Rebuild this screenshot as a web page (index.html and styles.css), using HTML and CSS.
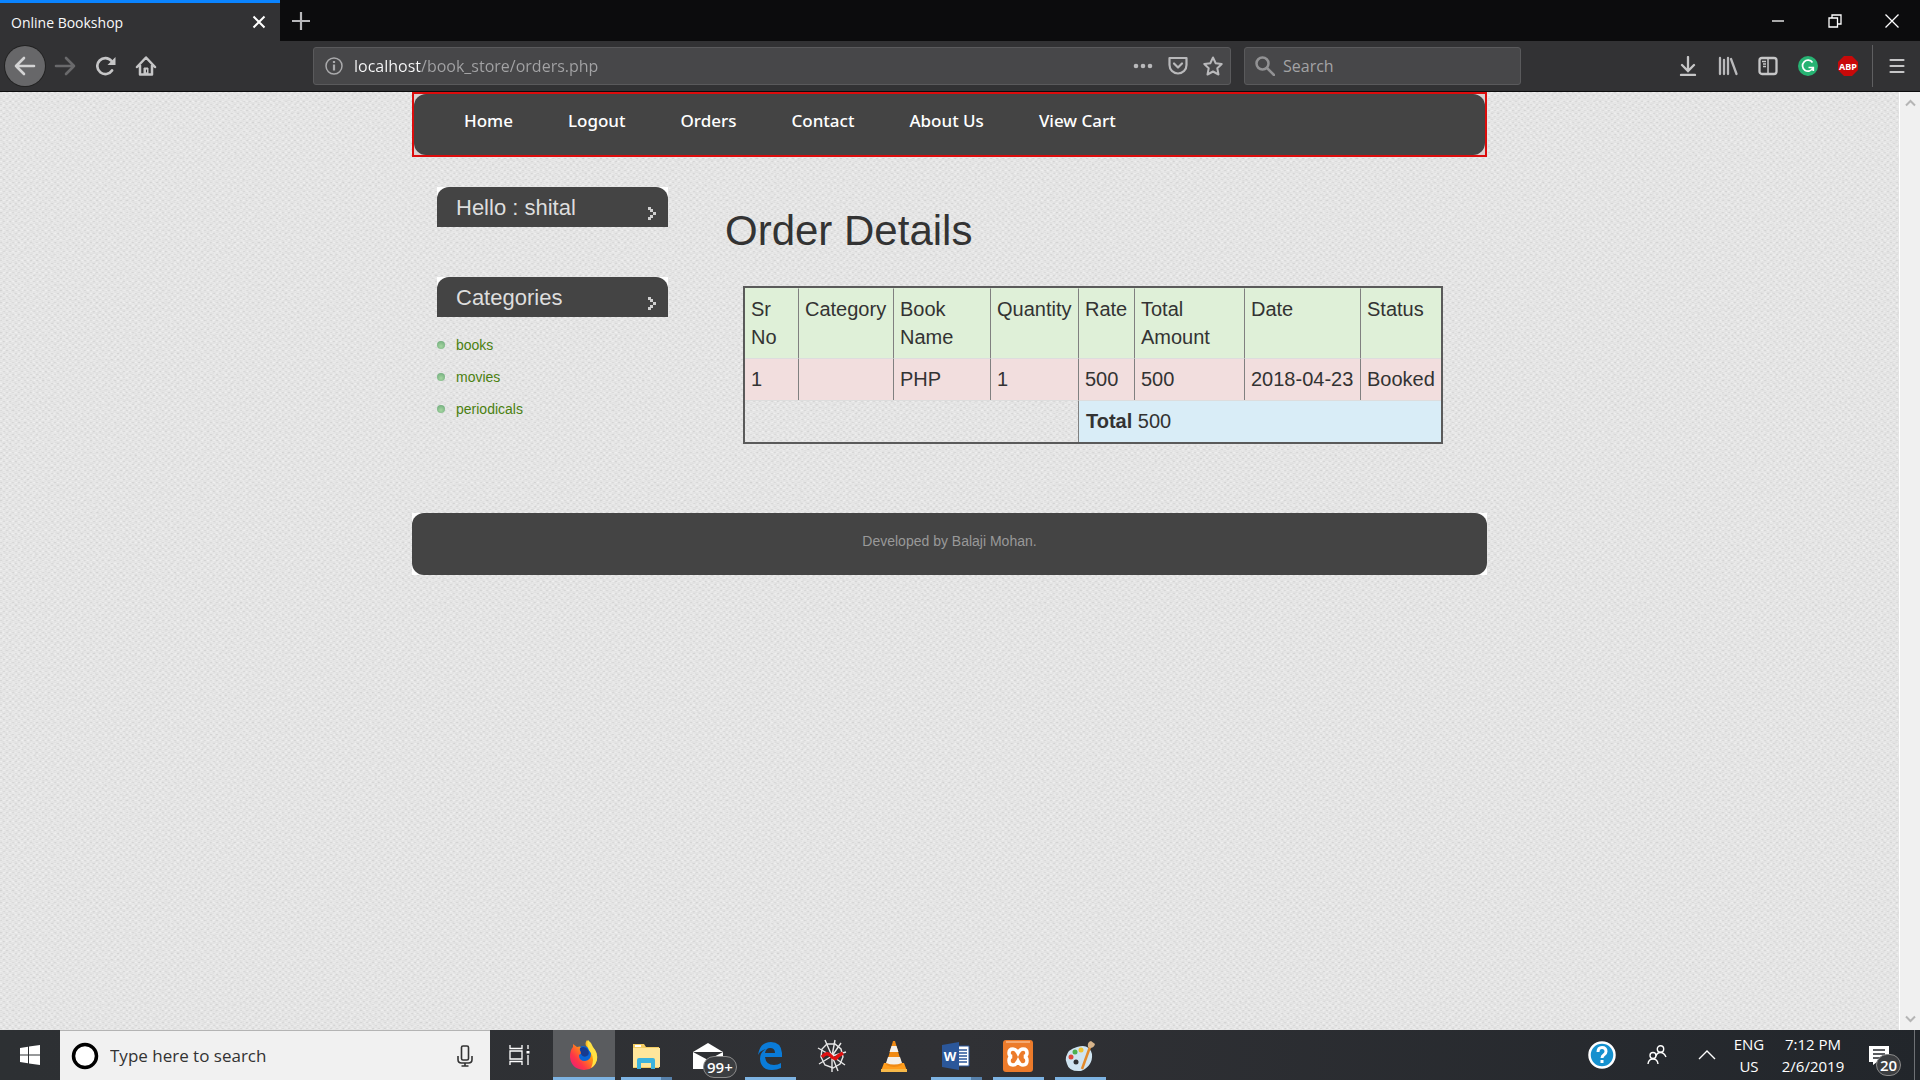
FILE: index.html
```html
<!DOCTYPE html>
<html lang="en">
<head>
<meta charset="utf-8">
<title>Online Bookshop</title>
<link rel="stylesheet" href="styles.css">
</head>
<body>
<header class="browser">
  <div class="tabs">
    <div class="tab"><span>Online Bookshop</span>
      <button class="icon-btn tab-close" aria-label="Close tab"><svg width="14" height="14" viewBox="0 0 14 14"><path d="M1.500 1.500l11 11M12.500 1.500l-11 11" stroke="#fff" stroke-width="2" fill="none"/></svg></button>
    </div>
    <button class="icon-btn tab-new" aria-label="New tab"><svg width="18" height="18" viewBox="0 0 18 18"><path d="M9 0v18M0 9h18" stroke="#b9b9bb" stroke-width="2.200"/></svg></button>
    <div class="window-buttons">
      <button class="icon-btn" aria-label="Minimize"><svg width="14" height="14" viewBox="0 0 14 14"><path d="M1 7h12" stroke="#fff" stroke-width="1.300"/></svg></button>
      <button class="icon-btn" aria-label="Restore"><svg width="14" height="14" viewBox="0 0 14 14" fill="none" stroke="#fff" stroke-width="1.300"><path d="M1 4h8.500v9H1zM4 4V1h9v9H9.500"/></svg></button>
      <button class="icon-btn" aria-label="Close"><svg width="14" height="14" viewBox="0 0 14 14"><path d="M.5.5l13 13M13.500.5l-13 13" stroke="#fff" stroke-width="1.300"/></svg></button>
    </div>
  </div>
  <div class="toolbar">
    <div class="nav-buttons">
      <button class="icon-btn back" aria-label="Back"><svg width="22" height="20" viewBox="0 0 22 20" fill="none" stroke="#d3d3d4" stroke-width="2.600" stroke-linecap="round" stroke-linejoin="round"><path d="M20 10H2M10 2L2 10l8 8"/></svg></button>
      <button class="icon-btn" aria-label="Forward"><svg width="22" height="20" viewBox="0 0 22 20" fill="none" stroke="#69696b" stroke-width="2.600" stroke-linecap="round" stroke-linejoin="round"><path d="M2 10h18M12 2l8 8-8 8"/></svg></button>
      <button class="icon-btn" aria-label="Reload"><svg width="20" height="20" viewBox="0 0 20 20" fill="none" stroke="#c6c6c7" stroke-width="2.700" stroke-linecap="round"><path d="M16 14.500A8 8 0 1 1 15.500 5"/><path d="M19.500 1v8h-8z" fill="#c6c6c7" stroke="none"/></svg></button>
      <button class="icon-btn" aria-label="Home"><svg width="22" height="20" viewBox="0 0 22 20" fill="none" stroke="#c6c6c7" stroke-width="2.500" stroke-linecap="round" stroke-linejoin="round"><path d="M2 11L11 1.500 20 11M5 9.500V18.500h12V9.500"/><path d="M9 18v-6h4v6z" fill="#c6c6c7" stroke-width="1"/><path d="M11.500 14v2" stroke="#323234" stroke-width="1"/></svg></button>
    </div>
    <div class="field address">
      <svg width="18" height="18" viewBox="0 0 18 18" fill="none" stroke="#aaaaac"><circle cx="9" cy="9" r="8" stroke-width="1.500"/><path d="M9 7.500v6M9 4v2" stroke-width="2.200"/></svg>
      <input class="url" type="text" aria-label="Address" value="localhost/book_store/orders.php">
      <div class="address-actions">
        <button class="icon-btn" aria-label="Page actions"><svg width="20" height="6" viewBox="0 0 20 6" fill="#b9b9bb"><circle cx="3" cy="3" r="2.300"/><circle cx="10" cy="3" r="2.300"/><circle cx="17" cy="3" r="2.300"/></svg></button>
        <button class="icon-btn" aria-label="Save to Pocket"><svg width="20" height="20" viewBox="0 0 20 20" fill="none" stroke="#b9b9bb" stroke-width="2.200" stroke-linecap="round" stroke-linejoin="round"><path d="M1.500 2h17v7a8.500 8.500 0 0 1-17 0z"/><path d="M6 7.500l4 4 4-4"/></svg></button>
        <button class="icon-btn" aria-label="Bookmark"><svg width="20" height="20" viewBox="0 0 20 20" fill="none" stroke="#b9b9bb" stroke-width="2" stroke-linejoin="round"><path d="M10 1.500l2.700 5.700 6 .8-4.400 4.300 1.200 6.200L10 15.500l-5.500 3 1.200-6.200L1.300 8l6-.8z"/></svg></button>
      </div>
    </div>
    <div class="field search">
      <svg width="20" height="20" viewBox="0 0 20 20" fill="none" stroke="#929294" stroke-width="2.500" stroke-linecap="round"><circle cx="7.500" cy="7.500" r="6"/><path d="M12 12l7 7"/></svg>
      <input class="search-box" type="text" aria-label="Search" placeholder="Search">
    </div>
    <div class="extensions">
      <button class="icon-btn" aria-label="Downloads"><svg width="20" height="20" viewBox="0 0 20 20" fill="none" stroke="#c6c6c7" stroke-width="2.300" stroke-linecap="round"><path d="M10 1v13M4 9l6 6 6-6M3 19h14"/></svg></button>
      <button class="icon-btn" aria-label="Library"><svg width="20" height="20" viewBox="0 0 20 20" fill="none" stroke="#b9b9bb" stroke-width="2.300" stroke-linecap="round"><path d="M2 2v16M6 4v14M10 2v16M13 3l5.500 15"/></svg></button>
      <button class="icon-btn" aria-label="Sidebars"><svg width="20" height="20" viewBox="0 0 20 20" fill="none" stroke="#c6c6c7"><rect x="1.500" y="2" width="17" height="16" rx="2.500" stroke-width="2.300"/><path d="M10 2v16" stroke-width="1.500"/><path d="M4 5.500h4M5 8h3M5 10.500h3" stroke-width="1.300"/></svg></button>
      <button class="icon-btn" aria-label="Grammarly"><svg width="20" height="20" viewBox="0 0 20 20"><circle cx="10" cy="10" r="10" fill="#27b373"/><path d="M14.500 6.500A5.500 5.500 0 1 0 15 12M10.500 11.500h4.800v3.500" fill="none" stroke="#fff" stroke-width="1.700"/></svg></button>
      <button class="icon-btn" aria-label="Adblock Plus"><svg width="20" height="20" viewBox="0 0 20 20"><path d="M6 0h8l6 6v8l-6 6H6l-6-6V6z" fill="#c80909"/><text x="10" y="13.500" class="abp" text-anchor="middle">ABP</text></svg></button>
      <span class="menu-cell"><button class="icon-btn" aria-label="Menu"><svg width="16" height="16" viewBox="0 0 16 16" stroke="#c6c6c7" stroke-width="2.200" stroke-linecap="round"><path d="M1.500 2h13M1.500 8h13M1.500 14h13"/></svg></button></span>
    </div>
  </div>
</header>

<div class="viewport">
  <div class="page">
    <div class="site">
      <nav class="menu"><div class="menu-inner">
        <a href="#">Home</a><a href="#">Logout</a><a href="#">Orders</a><a href="#">Contact</a><a href="#">About Us</a><a href="#">View Cart</a>
      </div></nav>
      <div class="columns">
        <aside class="sidebar">
          <section class="block">
            <div class="block-head"><h2>Hello : shital<svg width="9" height="13" viewBox="0 0 9 13" fill="#d0d0d0"><path d="M1 0h3v3H1zM3 2h3v3H3zM6 5h3v3H6zM3 8h3v3H3zM1 10h3v3H1z"/></svg></h2></div>
          </section>
          <section class="block">
            <div class="block-head"><h2>Categories<svg width="9" height="13" viewBox="0 0 9 13" fill="#d0d0d0"><path d="M1 0h3v3H1zM3 2h3v3H3zM6 5h3v3H6zM3 8h3v3H3zM1 10h3v3H1z"/></svg></h2></div>
            <ul class="links">
              <li><a href="#">books</a></li>
              <li><a href="#">movies</a></li>
              <li><a href="#">periodicals</a></li>
            </ul>
          </section>
        </aside>
        <main class="content">
          <h1>Order Details</h1>
          <table class="orders">
            <colgroup><col class="c-no"><col class="c-cat"><col class="c-book"><col class="c-qty"><col class="c-rate"><col class="c-amount"><col class="c-date"><col></colgroup>
            <thead><tr><th>Sr No</th><th>Category</th><th>Book Name</th><th>Quantity</th><th>Rate</th><th>Total Amount</th><th>Date</th><th>Status</th></tr></thead>
            <tbody>
              <tr class="item"><td>1</td><td></td><td>PHP</td><td>1</td><td>500</td><td>500</td><td>2018-04-23</td><td>Booked</td></tr>
              <tr><td colspan="4"></td><td colspan="4" class="total"><b>Total</b> 500</td></tr>
            </tbody>
          </table>
        </main>
      </div>
      <footer class="footer"><p>Developed by Balaji Mohan.</p></footer>
    </div>
  </div>
  <div class="scrollbar">
    <svg width="11" height="8" viewBox="0 0 11 8"><path d="M1 6.500l4.500-4.500L10 6.500" fill="none" stroke="#b5b5b5" stroke-width="2"/></svg>
    <svg width="11" height="8" viewBox="0 0 11 8"><path d="M1 1.500L5.500 6 10 1.500" fill="none" stroke="#b5b5b5" stroke-width="2"/></svg>
  </div>
</div>

<footer class="taskbar">
  <button class="start" aria-label="Start"><svg width="20" height="20" viewBox="0 0 20 20" fill="#fff"><path d="M0 3l8-1.200v7.700H0zM9 1.600L20 0v9.500H9zM0 10.500h8v7.700L0 17zM9 10.500h11V20L9 18.400z"/></svg></button>
  <label class="task-search">
    <svg width="28" height="28" viewBox="0 0 28 28"><circle cx="14" cy="14" r="11.500" fill="#fff" stroke="#000" stroke-width="3.500"/></svg>
    <input type="text" aria-label="Type here to search" placeholder="Type here to search">
    <svg width="16" height="22" viewBox="0 0 16 22" fill="none" stroke="#333" stroke-width="1.600"><rect x="4.500" y="1" width="7" height="14" rx="1.500"/><path d="M1 11v3.500q0 3.500 3.500 3.500h7q3.500 0 3.500-3.500V11M8 18v3M4.500 21h7"/></svg>
  </label>
  <button class="task-view" aria-label="Task view"><svg width="22" height="20" viewBox="0 0 22 20" fill="none" stroke="#fff" stroke-width="1.300"><path d="M1 0v3.500h12V0M1 20v-3.500h12V20M1 6h12v8H1zM19 0v4M19 10v10"/><path d="M17.500 6h3v2.500h-3z" fill="#fff" stroke="none"/></svg></button>
  <div class="apps">
    <button class="app active" aria-label="Firefox"><svg width="30" height="32" viewBox="0 0 30 32"><defs><linearGradient id="ff" x1="1" y1="0" x2="0" y2="1"><stop offset="0" stop-color="#fff44f"/><stop offset=".4" stop-color="#ff980e"/><stop offset=".7" stop-color="#ff3647"/><stop offset="1" stop-color="#e31587"/></linearGradient></defs><circle cx="14" cy="17" r="10" fill="#0a66d6"/><path d="M18 1q4 4 5 7 6 5 5 12-2 11-13 11Q2 30 1 18 1 11 4 8V5l4 3q3-1 4 0-2 2-1 4l3 1-4 3q0 6 6 6 6-1 6-7 0-4-4-7-3-3 0-7z" fill="url(#ff)"/><path d="M19 1q4 3 5 7 5 6 4 13-2 6-6 8 4-9 0-15-5-5-3-13z" fill="#ffe244"/><path d="M11 9q5-3 8 2 2 4-1 6-4 2-6-2z" fill="#173b91"/></svg></button>
    <button class="app running grouped" aria-label="File Explorer"><svg width="28" height="26" viewBox="0 0 28 26"><path d="M1 1h11l2 3h13v21H1z" fill="#f3cc62"/><path d="M1 5h27v19H1z" fill="#ffe69b"/><path d="M3 2h6v2H3z" fill="#fff"/><path d="M5 26v-9q0-2 2-2h14q2 0 2 2v9h-4v-6H9v6z" fill="#3cb3dd"/></svg></button>
    <button class="app" aria-label="Mail"><span class="mail"><svg width="30" height="28" viewBox="0 0 30 28"><path d="M0 10L15 1l15 9v17H0z" fill="#fff"/><path d="M0 10h30l-15 8z" fill="#2e3033"/></svg><span class="badge wide">99+</span></span></button>
    <button class="app running" aria-label="Edge"><svg width="26" height="30" viewBox="0 0 26 30"><path d="M1 14Q3 1 14 1q10 0 11 11v4H8q1 8 9 8 4 0 7-2v5q-4 2-9 2-11 0-12-11 0-7 6-10-5 1-8 6zM8 12h10q0-5-5-5-4 0-5 5z" fill="#0a7bd8" fill-rule="evenodd"/></svg></button>
    <button class="app" aria-label="Spider"><svg width="30" height="34" viewBox="0 0 30 34" fill="none" stroke="#e8e8e8" stroke-width="1.400"><path d="M15 17L18 1M15 17L24 4M15 17L8 1M15 17L29 13M15 17L1 9M15 17L28 26M15 17L2 25M15 17L21 32M15 17v16"/><path d="M10 5l8 0 6 5 2 8-3 7-7 4-8-3-4-8 1-8z"/><path d="M5 18q5-6 9-1 4 5 7 0l5-3" stroke="#df1010" stroke-width="3.500"/></svg></button>
    <button class="app" aria-label="VLC"><svg width="26" height="32" viewBox="0 0 26 32"><path d="M3 23h20l3 8H0z" fill="#ff9d1c"/><path d="M12 1h2l7 24q-8 4-16 0z" fill="#f08a13"/><path d="M10.500 6h5l2 6h-9zM7 17h12l2 6q-8 3-16 0z" fill="#f4f0ea"/><path d="M0 29h26v3H0z" fill="#f7b949"/></svg></button>
    <button class="app running grouped" aria-label="Word"><svg width="28" height="28" viewBox="0 0 28 28"><path d="M14 4h13v20H14z" fill="#fff" stroke="#2b579a"/><path d="M16 8h9M16 11h9M16 14h9M16 17h9M16 20h9" stroke="#2b579a" stroke-width="1.500"/><path d="M0 3l17-3v28L0 25z" fill="#2b579a"/><text x="8" y="19" class="word" text-anchor="middle">W</text></svg></button>
    <button class="app running" aria-label="XAMPP"><svg width="30" height="32" viewBox="0 0 30 32"><rect width="30" height="32" rx="3" fill="#ec7b2b"/><path d="M3 2h24" stroke="#f7b88b" stroke-width="1.500"/><path d="M10 9q-4 0-4 4 0 3 3 3.500-3 .5-3 4Q6 25 10 25q3 0 5-4 2 4 5 4 4 0 4-4.500 0-3.500-3-4 3-.5 3-3.500 0-4-4-4-3 0-5 4-2-4-5-4z" fill="none" stroke="#fff" stroke-width="3.500"/></svg></button>
    <button class="app running" aria-label="Paint"><svg width="30" height="32" viewBox="0 0 30 32"><path d="M12 7Q24 3 27 14q1 12-11 17-12 1-14-7-2-4-1-7 2-8 11-10z" fill="#cfe4f1"/><circle cx="6" cy="17" r="2.500" fill="#e04b3c"/><circle cx="10" cy="12" r="2.500" fill="#4cb050"/><circle cx="16" cy="10" r="2.500" fill="#f0c330"/><circle cx="11" cy="22" r="2.500" fill="#2e3033"/><path d="M17 29L25 7" stroke="#e28a2c" stroke-width="2.500"/><path d="M23 7q-1-5 3-6l4 3q-1 4-5 4z" fill="#d6b48b"/></svg></button>
  </div>
  <div class="tray">
    <svg class="help" width="30" height="30" viewBox="0 0 30 30"><circle cx="15" cy="15" r="12.500" fill="#1591cf" stroke="#fff" stroke-width="2.500"/><path d="M11 12q0-4.500 4-4.500t4 4q0 2-2 3.200t-2 3.300M15 20v3" fill="none" stroke="#fff" stroke-width="3"/></svg>
    <svg class="people" width="20" height="20" viewBox="0 0 20 20" fill="none" stroke="#fff" stroke-width="1.400"><circle cx="13.500" cy="4" r="3.200"/><circle cx="6" cy="10.500" r="3"/><path d="M9 11q1-3.500 4.500-3.500T19 12M1 19q.5-5 5-5t5 5"/></svg>
    <svg class="chevron" width="18" height="10" viewBox="0 0 18 10"><path d="M1 9l8-8 8 8" fill="none" stroke="#fff" stroke-width="1.400"/></svg>
    <div class="lang">ENG<br>US</div>
    <div class="clock">7:12 PM<br>2/6/2019</div>
    <div class="notes"><svg width="20" height="20" viewBox="0 0 20 20"><path d="M0 1h20v16H8l-4 3v-3H0z" fill="#fff"/><path d="M4 5h12M4 9h12M4 13h8" stroke="#24272c" stroke-width="1.300"/></svg><span class="badge">20</span></div>
    <div class="show-desktop"></div>
  </div>
</footer>
</body>
</html>
```
FILE: styles.css
```css
* { box-sizing: border-box; }
body {
  margin: 0;
  min-height: 100vh;
  display: flex;
  flex-direction: column;
  font-family: "Open Sans", "Noto Sans", sans-serif;
  background: #e5e5e5;
}
h1, h2, p, ul { margin: 0; padding: 0; }
button { border: 0; background: none; padding: 0; font: inherit; }
svg { display: block; flex: none; }
input { border: 0; outline: 0; background: none; padding: 0; min-width: 0; font: inherit; }
.icon-btn { display: flex; align-items: center; justify-content: center; flex: none; }

/* Browser chrome */
.browser { background: #323234; border-bottom: 1px solid #0c0c0d; }
.tabs { display: flex; height: 41px; background: #0c0c0d; }
.tab {
  width: 280px;
  display: flex;
  align-items: center;
  justify-content: space-between;
  padding: 0 14px 0 11px;
  border-top: 3px solid #0a84ff;
  background: #323234;
  color: #f9f9fa;
  font-size: 14px;
}
.tab-new { width: 42px; }
.window-buttons { display: flex; margin-left: auto; }
.window-buttons .icon-btn { width: 57px; }
.toolbar { display: flex; align-items: center; height: 50px; padding-left: 5px; }
.nav-buttons { display: flex; align-items: center; width: 308px; }
.nav-buttons .icon-btn { width: 40px; height: 40px; }
.nav-buttons .back { border-radius: 50%; background: #676769; box-shadow: 0 0 0 1px #222; }
.nav-buttons .back + .icon-btn { margin-right: 1px; }
.field {
  display: flex;
  align-items: center;
  height: 38px;
  border: 1px solid #5a5a5c;
  border-radius: 3px;
  background: #474749;
  font-size: 16px;
}
.address { flex: 1; gap: 11px; padding: 0 7px 0 11px; margin-right: 13px; }
.url {
  flex: 1;
  color: transparent;
  background: linear-gradient(90deg, #f9f9fa 67px, #a3a3a5 67px);
  background-clip: text;
  -webkit-background-clip: text;
}
.address-actions { display: flex; align-items: center; gap: 15px; }
.search { width: 277px; padding: 0 10px; gap: 8px; }
.search-box { flex: 1; }
.search-box::placeholder { color: #a3a3a5; opacity: 1; }
.extensions { display: flex; align-items: center; gap: 20px; margin-left: 157px; }
.menu-cell { display: flex; align-items: center; justify-content: center; width: 48px; height: 42px; margin-left: -6px; border-left: 1px solid #5f5f61; }
.abp { font: 700 9px "Noto Sans", sans-serif; fill: #fff; }
.word { font: 700 13px "Open Sans", sans-serif; fill: #fff; }

/* Page area */
.viewport { flex: 1; display: flex; }
.page {
  flex: 1;
  background-color: #e8e8e8;
  background-image:
    url("data:image/svg+xml,%3Csvg xmlns='http://www.w3.org/2000/svg' width='200' height='200'%3E%3Cfilter id='n'%3E%3CfeTurbulence type='fractalNoise' baseFrequency='.4' numOctaves='2' stitchTiles='stitch'/%3E%3CfeColorMatrix values='0 0 0 0 0 0 0 0 0 0 0 0 0 0 0 .5 0 0 0 -.18'/%3E%3C/filter%3E%3Crect width='200' height='200' filter='url(%23n)' opacity='.18'/%3E%3C/svg%3E"),
    url("data:image/svg+xml,%3Csvg xmlns='http://www.w3.org/2000/svg' width='6' height='6'%3E%3Cpath d='M0 0h2v1H0zM3 3h2v1H3z' fill='%23dbdbdb'/%3E%3Cpath d='M3 0h2v1H3zM0 3h2v1H0z' fill='%23f0f0f0'/%3E%3C/svg%3E");
}
.site { max-width: 1075px; margin: 0 auto; font-family: "Liberation Sans", Arial, sans-serif; }
.menu { border: 2px solid #dc0c0c; background: #d8d0d0; }
.menu-inner {
  display: flex;
  gap: 55px;
  height: 61px;
  padding: 14px 50px 0;
  border-radius: 12px;
  background: #444;
}
.menu a { color: #fff; text-decoration: none; font: 500 17px/26px "Noto Sans", "Open Sans", sans-serif; }
.columns { display: flex; gap: 57px; padding: 30px 44px 69px 25px; }
.sidebar { width: 231px; flex: none; }
.block { margin-bottom: 50px; }
.block:last-child { margin-bottom: 0; }
.block-head { background: #fff; }
.block h2 {
  display: flex;
  justify-content: space-between;
  align-items: center;
  height: 40px;
  padding: 2px 12px 0 19px;
  border-radius: 12px 12px 0 0;
  background: #444;
  color: #ddd;
  font-size: 22px;
  font-weight: 400;
}
.block h2 svg { margin-top: 10px; }
.links { list-style: none; padding-top: 12px; }
.links li { display: flex; align-items: center; gap: 11px; height: 32px; font-size: 14px; }
.links li::before {
  content: "";
  width: 8px;
  height: 8px;
  border-radius: 50%;
  background: radial-gradient(circle at 50% 65%, #a5d6a0, #68a578);
}
.links a { color: #4a8010; text-decoration: none; }
.content { flex: 1; color: #333; }
h1 { padding: 19px 0 31px; font-size: 42px; line-height: 49px; font-weight: 400; }
.orders {
  width: 700px;
  margin-left: 18px;
  table-layout: fixed;
  border-collapse: separate;
  border-spacing: 0;
  border: 2px solid #5a5a5a;
  font-size: 20px;
  line-height: 28px;
}
.orders th, .orders td {
  padding: 6px 0 7px 6px;
  height: 42px;
  vertical-align: top;
  text-align: left;
  font-weight: 400;
  border-left: 1px solid #808080;
  border-top: 1px solid #ddd;
}
.orders th { background: #dff0d8; border-top-color: #dff0d8; }
.orders th:first-child, .orders td:first-child { border-left: 0; }
.orders .item td { background: #f2dede; }
.orders .total { padding-left: 7px; background: #d9edf7; }
.c-no { width: 53px; }
.c-cat { width: 95px; }
.c-book { width: 97px; }
.c-qty { width: 88px; }
.c-rate { width: 56px; }
.c-amount { width: 110px; }
.c-date { width: 116px; }
.footer { background: #fff; }
.footer p {
  height: 62px;
  padding-top: 18px;
  border-radius: 12px;
  background: #444;
  color: #999;
  font-size: 14px;
  line-height: 20px;
  text-align: center;
}
.scrollbar {
  width: 21px;
  display: flex;
  flex-direction: column;
  align-items: center;
  justify-content: space-between;
  padding: 7px 0;
  background: #f0f0f0;
  border-left: 1px solid #fff;
}

/* Taskbar */
.taskbar { display: flex; height: 50px; background: linear-gradient(90deg, #2d3033, #303135 50%, #22262b); color: #fff; }
.taskbar button { display: flex; align-items: center; justify-content: center; }
.start { width: 60px; }
.task-search {
  width: 430px;
  display: flex;
  align-items: center;
  padding: 0 17px 0 11px;
  gap: 11px;
  background: #f1f1f1;
  border-top: 1px solid #b4b4b4;
  font-size: 17px;
}
.task-search input { flex: 1; }
.task-search input::placeholder { color: #333; opacity: 1; }
.task-view { width: 60px; margin-right: 3px; }
.apps { display: flex; }
.app { width: 62px; border: solid transparent; border-width: 1px 0 0; }
.app.active { border-width: 0; background: linear-gradient(#7db3e2, #7db3e2) bottom / 100% 3px no-repeat #5a5c5f; }
.app.running { background: linear-gradient(#7db3e2, #7db3e2) bottom / 51px 3px no-repeat; }
.app.grouped { background: linear-gradient(90deg, #7db3e2 40px, #5680aa 40px) bottom / 51px 3px no-repeat; }
.mail, .notes { position: relative; }
.badge {
  position: absolute;
  left: 7px;
  top: 9px;
  height: 22px;
  padding: 0 3px;
  border: 1px solid #8b8b8b;
  border-radius: 11px;
  background: #3c3e41;
  color: #fff;
  font-size: 15px;
  font-weight: 600;
  line-height: 20px;
}
.badge.wide { left: 10px; top: 14px; }
.tray { display: flex; align-items: center; margin-left: auto; font-size: 15px; line-height: 22px; text-align: center; }
.help { margin-right: 30px; }
.people { margin-right: 31px; }
.chevron { margin-right: 9px; }
.lang { width: 48px; }
.clock { width: 80px; }
.notes { margin: 0 25px 0 16px; }
.show-desktop { width: 6px; height: 50px; border-left: 1px solid #6e7175; }
```
